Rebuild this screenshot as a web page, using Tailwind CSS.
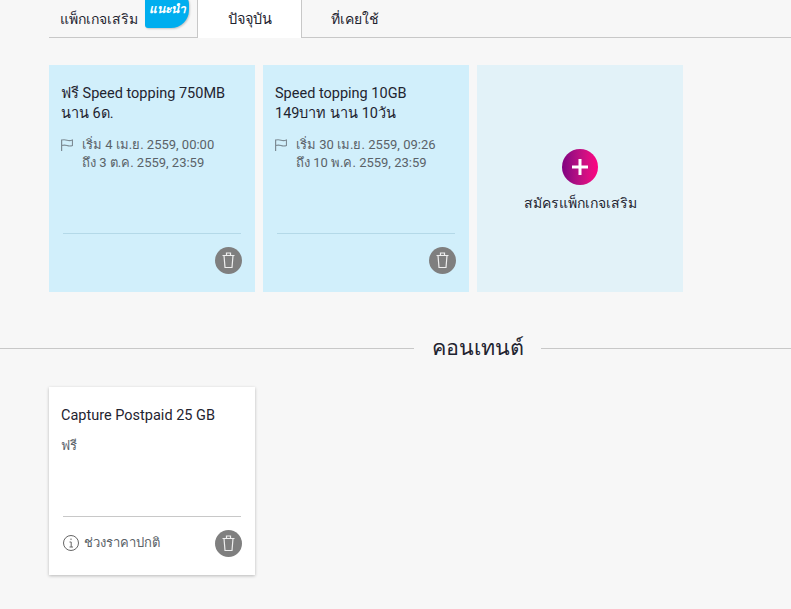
<!DOCTYPE html>
<html lang="th">
<head>
    <meta charset="UTF-8">
    <meta name="viewport" content="width=device-width, initial-scale=1.0">
    <title>แพ็กเกจเสริม</title>
    <script src="https://cdn.jsdelivr.net/npm/@tailwindcss/browser@4"></script>
</head>
<body class="bg-[#f7f7f7] text-[#1f2430] font-['Roboto','Noto_Sans','Noto_Sans_CJK_SC',sans-serif] h-[609px] overflow-hidden">
    <!-- tabs -->
    <div class="ml-[49px] h-[38px] flex border-b border-[#c8c8c8] text-[14px]">
        <div class="relative w-[149px] pl-[11px] pt-[9px] border-r border-[#c8c8c8]">
            แพ็กเกจเสริม
            <span class="absolute left-[96px] top-[-6px] w-[44px] h-[34px] bg-[#00aeef] rounded-bl-[3px] rounded-br-[18px] rounded-tr-[10px] text-white text-[12px] italic font-semibold text-center pt-[6px] shadow-[1px_1px_2px_rgba(0,0,0,0.2)]">แนะนำ</span>
        </div>
        <div class="w-[104px] h-[38px] bg-white border-r border-[#c8c8c8] text-center pt-[9px] text-[14.5px]">ปัจจุบัน</div>
        <div class="w-[106px] text-center pt-[9px]">ที่เคยใช้</div>
    </div>

    <!-- packages -->
    <div class="ml-[49px] mt-[27px] flex gap-2">
        <div class="w-[206px] h-[227px] bg-[#d1effb] px-[12px] pt-[19px] flex flex-col">
            <p class="text-[14.5px] leading-[20px]">ฟรี Speed topping 750MB<br>นาน 6ด.</p>
            <div class="flex mt-[12px] text-[13px] leading-[18px] text-[#5a6268]">
                <svg class="mt-[3px] mr-[9px] shrink-0" width="12" height="12" viewBox="0 0 12 12" fill="none" stroke="#7d8b94" stroke-width="1.2"><path d="M.6 12V1C3 .5 4 .5 6 1.200S9.500 1.800 11.500 1V6.500C9.500 7.300 8 7.200 6 6.500S3 5.800.6 6.500"/></svg>
                <p>เริ่ม 4 เม.ย. 2559, 00:00<br>ถึง 3 ต.ค. 2559, 23:59</p>
            </div>
            <div class="mt-auto mx-[2px] border-t border-[#b4d9e8] h-[59px] relative">
                <span class="absolute right-[-1px] top-[13px] w-[27px] h-[27px] rounded-full bg-[#7f7f7f] flex items-center justify-center">
                    <svg width="13" height="17" viewBox="0 0 13 17" fill="none" stroke="#eee" stroke-width="1.2"><path d="M.5 3.500H12.500M4.500 3.500V1H8.500V3.500M2 3.500L3 15.500H10L11 3.500"/></svg>
                </span>
            </div>
        </div>
        <div class="w-[206px] h-[227px] bg-[#d1effb] px-[12px] pt-[19px] flex flex-col">
            <p class="text-[14.5px] leading-[20px]">Speed topping 10GB<br>149บาท นาน 10วัน</p>
            <div class="flex mt-[12px] text-[13px] leading-[18px] text-[#5a6268]">
                <svg class="mt-[3px] mr-[9px] shrink-0" width="12" height="12" viewBox="0 0 12 12" fill="none" stroke="#7d8b94" stroke-width="1.2"><path d="M.6 12V1C3 .5 4 .5 6 1.200S9.500 1.800 11.500 1V6.500C9.500 7.300 8 7.200 6 6.500S3 5.800.6 6.500"/></svg>
                <p>เริ่ม 30 เม.ย. 2559, 09:26<br>ถึง 10 พ.ค. 2559, 23:59</p>
            </div>
            <div class="mt-auto mx-[2px] border-t border-[#b4d9e8] h-[59px] relative">
                <span class="absolute right-[-1px] top-[13px] w-[27px] h-[27px] rounded-full bg-[#7f7f7f] flex items-center justify-center">
                    <svg width="13" height="17" viewBox="0 0 13 17" fill="none" stroke="#eee" stroke-width="1.2"><path d="M.5 3.500H12.500M4.500 3.500V1H8.500V3.500M2 3.500L3 15.500H10L11 3.500"/></svg>
                </span>
            </div>
        </div>
        <div class="w-[206px] h-[227px] bg-[#e2f2f8] flex flex-col items-center pt-[84px]">
            <span class="w-9 h-9 rounded-full bg-gradient-to-r from-[#800080] to-[#ff0080] flex items-center justify-center">
                <svg width="18" height="18" viewBox="0 0 18 18" fill="none" stroke="#fff" stroke-width="3"><path d="M9 1V17M1 9H17"/></svg>
            </span>
            <p class="mt-[8px] text-[14px] leading-[20px]">สมัครแพ็กเกจเสริม</p>
        </div>
    </div>

    <!-- heading -->
    <div class="mt-[40px] h-[32px] flex items-center">
        <div class="w-[414px] border-t border-[#c8c8c8]"></div>
        <h2 class="w-[127px] text-center text-[21.500px] font-medium leading-[32px]">คอนเทนต์</h2>
        <div class="flex-1 border-t border-[#c8c8c8]"></div>
    </div>

    <!-- content -->
    <div class="ml-[49px] mt-[23px] w-[206px] h-[188px] bg-white shadow-[0_1px_3px_rgba(0,0,0,0.25)] px-[12px] pt-[19px] flex flex-col">
        <p class="text-[14.500px] leading-[20px]">Capture Postpaid 25 GB</p>
        <p class="mt-[11px] text-[13px] leading-[18px] text-[#5a6268]">ฟรี</p>
        <div class="mt-auto mx-[2px] border-t border-[#c8c8c8] h-[59px] relative">
            <div class="flex items-center text-[13px] leading-[16px] text-[#5a6268] pt-[18px]">
                <svg class="mr-[5px]" width="16" height="16" viewBox="0 0 16 16" fill="none" stroke="#666" stroke-width="1"><circle cx="8" cy="8" r="7.500"/><path d="M6.500 7H8.200V12M6.500 12H10M8 3.500V5"/></svg>
                ช่วงราคาปกติ
            </div>
            <span class="absolute right-[-1px] top-[13px] w-[27px] h-[27px] rounded-full bg-[#7f7f7f] flex items-center justify-center">
                <svg width="13" height="17" viewBox="0 0 13 17" fill="none" stroke="#eee" stroke-width="1.2"><path d="M.5 3.500H12.500M4.500 3.500V1H8.500V3.500M2 3.500L3 15.500H10L11 3.500"/></svg>
            </span>
        </div>
    </div>
</body>
</html>
